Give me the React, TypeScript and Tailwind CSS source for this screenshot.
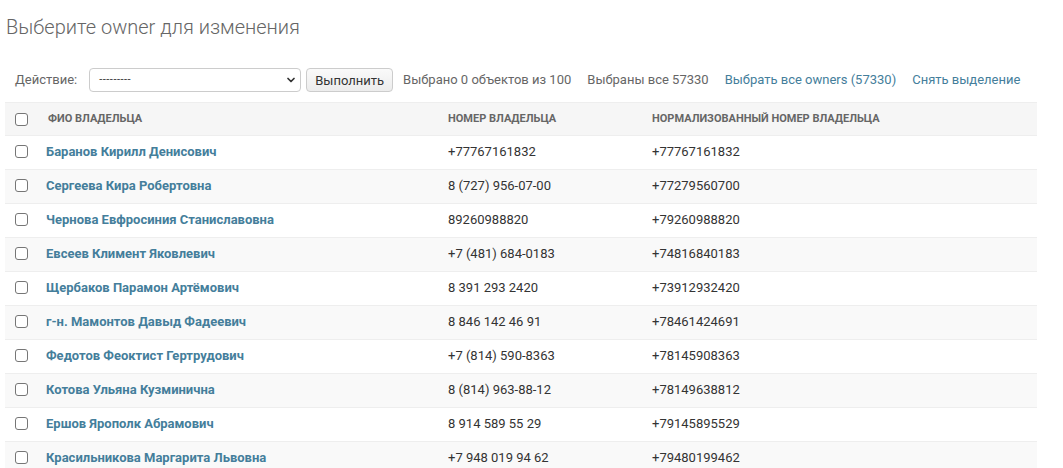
import { ChevronDown } from "lucide-react";

type Owner = { name: string; phone: string; normalized: string };

const OWNERS: Owner[] = [
  { name: "Баранов Кирилл Денисович", phone: "+77767161832", normalized: "+77767161832" },
  { name: "Сергеева Кира Робертовна", phone: "8 (727) 956-07-00", normalized: "+77279560700" },
  { name: "Чернова Евфросиния Станиславовна", phone: "89260988820", normalized: "+79260988820" },
  { name: "Евсеев Климент Яковлевич", phone: "+7 (481) 684-0183", normalized: "+74816840183" },
  { name: "Щербаков Парамон Артёмович", phone: "8 391 293 2420", normalized: "+73912932420" },
  { name: "г-н. Мамонтов Давыд Фадеевич", phone: "8 846 142 46 91", normalized: "+78461424691" },
  { name: "Федотов Феоктист Гертрудович", phone: "+7 (814) 590-8363", normalized: "+78145908363" },
  { name: "Котова Ульяна Кузминична", phone: "8 (814) 963-88-12", normalized: "+78149638812" },
  { name: "Ершов Ярополк Абрамович", phone: "8 914 589 55 29", normalized: "+79145895529" },
  { name: "Красильникова Маргарита Львовна", phone: "+7 948 019 94 62", normalized: "+79480199462" },
];

function Checkbox() {
  return <span className="block w-[13px] h-[13px] rounded-[3px] border border-[#767676] bg-white" />;
}

export default function App() {
  return (
    <div className="w-[1063px] h-[468px] overflow-hidden bg-white text-[13px] text-[#333] font-['Roboto','Liberation_Sans',sans-serif]">
      {/* Title */}
      <h1 className="pl-[6px] pt-[13px] text-[20px] leading-[28px] font-light text-[#666]">
        Выберите owner для изменения
      </h1>

      {/* Actions bar */}
      <div className="mt-[27px] ml-[15px] flex items-center h-[24px]">
        <span className="text-[#666] mr-[12px]">Действие:</span>
        <div className="relative w-[212px] h-[24px] border border-[#ccc] rounded-[4px] flex items-center pl-[9px] text-[#333]">
          <span className="text-[11px] tracking-[0.5px]">---------</span>
          <ChevronDown className="absolute right-[3px] top-[5px] w-[12px] h-[12px] text-[#333]" strokeWidth={3.5} />
        </div>
        <button className="ml-[5px] h-[24px] px-[8px] border border-[#ccc] rounded-[4px] bg-gradient-to-b from-[#fafafa] to-[#ececec] text-[#333] leading-none">
          Выполнить
        </button>
        <span className="ml-[10px] text-[#666]">Выбрано 0 объектов из 100</span>
        <span className="ml-[16px] text-[#666]">Выбраны все 57330</span>
        <a className="ml-[16px] text-[#447e9b]">Выбрать все owners (57330)</a>
        <a className="ml-[16px] text-[#447e9b]">Снять выделение</a>
      </div>

      {/* Table */}
      <div className="mt-[10px] ml-[5px] w-[1032px]">
        <div className="flex items-center h-[34px] bg-[#f6f6f6] border-t border-b border-[#eee] text-[11px] font-bold uppercase text-[#666]">
          <div className="w-[31px] pl-[10px]"><Checkbox /></div>
          <div className="w-[402px] pl-[12px]">Фио владельца</div>
          <div className="w-[204px] pl-[10px]">Номер владельца</div>
          <div className="flex-1 pl-[10px]">Нормализованный номер владельца</div>
        </div>
        {OWNERS.map((o, i) => (
          <div
            key={o.name}
            className={`flex items-center h-[34px] pb-[2px] border-b border-[#eee] ${i % 2 === 1 ? "bg-[#f9f9f9]" : "bg-white"}`}
          >
            <div className="w-[31px] pl-[10px]"><Checkbox /></div>
            <div className="w-[402px] pl-[10px] font-bold text-[#447e9b]">{o.name}</div>
            <div className="w-[204px] pl-[10px] text-[#333]">{o.phone}</div>
            <div className="flex-1 pl-[10px] text-[#333]">{o.normalized}</div>
          </div>
        ))}
      </div>
    </div>
  );
}
